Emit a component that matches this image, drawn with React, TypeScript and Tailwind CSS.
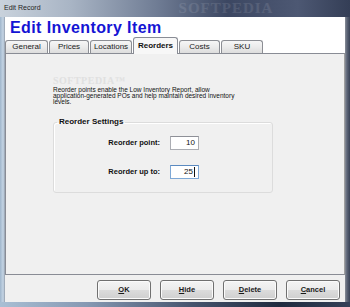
const tabs = [
  { label: "General", w: "w-[43px]" },
  { label: "Prices", w: "w-[40px]" },
  { label: "Locations", w: "w-[42px]" },
  { label: "Reorders", w: "w-[45px]", active: true },
  { label: "Costs", w: "w-[41px]" },
  { label: "SKU", w: "w-[42px]" },
];

function Btn({ hot, rest }: { hot: string; rest: string }) {
  return (
    <button className="w-[54px] h-[20px] rounded-[3px] border border-[#707070] bg-[linear-gradient(180deg,#f4f4f4_0%,#ebebeb_50%,#dcdcdc_51%,#cfcfcf_100%)] shadow-[inset_0_0_0_1px_#fbfbfb] text-[7.5px] font-bold text-[#1a1a1a]">
      <span className="underline">{hot}</span>
      {rest}
    </button>
  );
}

export default function App() {
  return (
    <div className="w-[350px] h-[307px] flex flex-col overflow-hidden font-['Liberation_Sans',Arial,sans-serif] bg-[#2f3a4f]">
      {/* title bar */}
      <div className="h-[17px] flex items-center bg-[linear-gradient(90deg,#c9d2dc_0%,#a9b5c5_20%,#6f7c94_45%,#3c4762_65%,#4d5873_85%,#343e56_100%)]">
        <span className="pl-[4px] text-[7px] text-[#1f1f1f]">Edit Record</span>
        <span className="ml-[138px] font-['Liberation_Serif',serif] font-bold text-[15px] leading-none tracking-[1px] text-white/10">
          SOFTPEDIA
        </span>
      </div>

      <div className="flex flex-1 min-h-0">
        {/* left frame */}
        <div className="w-[5px] bg-[linear-gradient(90deg,#9fb6cc_0%,#c3d3e3_60%,#b3c2d2_80%,#8d96a2_100%)]" />

        <div className="flex-1 flex flex-col min-w-0">
          {/* header */}
          <div className="h-[21px] bg-white pl-[5px] flex items-center">
            <h1 className="text-[16px] font-bold leading-none tracking-[0.4px] text-[#1414d4]">Edit Inventory Item</h1>
          </div>

          {/* tab strip */}
          <div className="h-[15px] bg-white flex items-end gap-px pl-0">
            {tabs.map((t) =>
              t.active ? (
                <div
                  key={t.label}
                  className={`${t.w} h-[17px] -mb-px z-10 rounded-t-[3px] border border-b-0 border-[#898c95] bg-[#f7f7f7] flex items-center justify-center text-[8px] font-bold text-[#111]`}
                >
                  {t.label}
                </div>
              ) : (
                <div
                  key={t.label}
                  className={`${t.w} h-[13px] rounded-t-[3px] border border-b-0 border-[#8c8e94] bg-[linear-gradient(180deg,#f6f6f6_0%,#ebebeb_50%,#dddddd_100%)] flex items-center justify-center text-[8px] text-[#1a1a1a]`}
                >
                  {t.label}
                </div>
              )
            )}
          </div>

          {/* tab page */}
          <div className="flex-1 bg-[#f0f0f0] border border-[#898c95] border-r-[#a0a0a0] pt-[21px] pl-[47px]">
            <div className="h-[11px] font-['Liberation_Serif',serif] font-bold text-[10px] leading-[11px] tracking-[0.5px] text-[#e0e0e0]">
              SOFTPEDIA™
            </div>
            <p className="mt-[1px] text-[6.5px] leading-[6px] text-[#111]">
              Reorder points enable the Low Inventory Report, allow
              <br />
              application-generated POs and help maintain desired inventory
              <br />
              levels.
            </p>

            <fieldset className="mt-[12px] w-[220px] h-[76px] border border-[#dcdcdc] rounded-[3px] shadow-[inset_1px_1px_0_#ffffff]">
              <legend className="ml-[3px] px-[2px] text-[8px] font-bold leading-[10px] text-[#111]">Reorder Settings</legend>
              <div className="mt-[9px] flex items-center gap-[10px]">
                <span className="w-[106px] text-right text-[7.5px] font-bold text-[#111]">Reorder point:</span>
                <div className="w-[29px] h-[14px] bg-white border border-[#abadb3] border-t-[#8e9097] flex items-center justify-end pr-[3px] text-[8px] text-[#111]">
                  10
                </div>
              </div>
              <div className="mt-[15px] flex items-center gap-[10px]">
                <span className="w-[106px] text-right text-[7.5px] font-bold text-[#111]">Reorder up to:</span>
                <div className="w-[29px] h-[14px] bg-white border border-[#7ea8d6] border-t-[#5b8ac0] flex items-center justify-end pr-[3px] text-[8px] text-[#111]">
                  25<span className="ml-px w-px h-[10px] bg-[#111]" />
                </div>
              </div>
            </fieldset>
          </div>

          {/* button bar */}
          <div className="h-[27px] bg-[#f0f0f0] flex justify-end items-start gap-[9px] pt-[5px] pr-[5px]">
            <Btn hot="O" rest="K" />
            <Btn hot="H" rest="ide" />
            <Btn hot="D" rest="elete" />
            <Btn hot="C" rest="ancel" />
          </div>
        </div>

        {/* right frame */}
        <div className="w-[5px] bg-[linear-gradient(90deg,#8a8f99_0%,#5d6577_40%,#3a4357_100%)]" />
      </div>

      {/* bottom frame */}
      <div className="h-[5px] bg-[linear-gradient(90deg,#a9bfd4_0%,#8598b2_25%,#45536d_55%,#1f2a3f_80%,#344058_100%)]" />
    </div>
  );
}
